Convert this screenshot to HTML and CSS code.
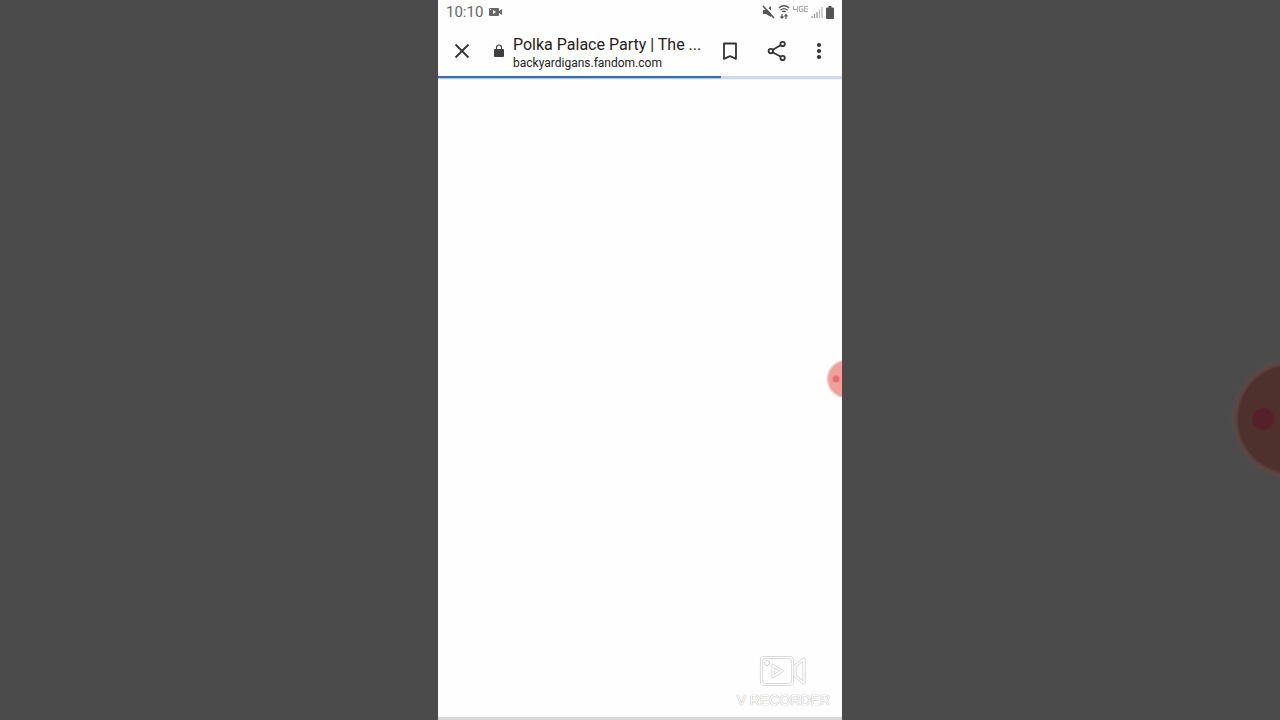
FILE: index.html
```html
<!DOCTYPE html>
<html lang="en">
<head>
  <meta charset="UTF-8" />
  <meta name="viewport" content="width=device-width, initial-scale=1">
  <title>Polka Palace Party | The Backyardigans</title>
  <link rel="stylesheet" href="styles.css">
</head>
<body>

  <div class="backdrop-bubble"></div>

  <main class="phone">
    <div class="status-bar">
      <span class="clock">10:10</span>
      <svg class="camera" width="14" height="10" viewBox="0 0 14 10">
        <path fill="#666" fill-rule="evenodd" d="M1 1h8q1 0 1 1v6q0 1-1 1H1q-1 0-1-1V2q0-1 1-1zm3 2v4l3-2zM1 2v1h1V2z"/>
        <path fill="#666" d="M10 4l3-2v6l-3-2z"/>
      </svg>

      <div class="status-icons">
        <svg width="13" height="14" viewBox="0 0 13 14">
          <path fill="#555" d="M1 5h3l5-4v11L4 9H1z"/>
          <path stroke="#fff" stroke-width="2" d="M2 0l11 11"/>
          <path stroke="#555" stroke-width="1.500" d="M1 1l11 12"/>
        </svg>
        <svg class="wifi" width="12" height="16" viewBox="0 0 12 16" fill="none" stroke="#555" stroke-width="1.200">
          <path d="M1 4q5-4.500 10 0M2.500 6.200q3.500-3.200 7 0M4.300 8q1.700-1.500 3.400 0"/>
          <path d="M4 10v4M2.500 12.500L4 14.200l1.500-1.700M8 15v-4M6.500 12.300L8 10.600l1.500 1.700"/>
        </svg>
        <svg class="lte" width="15" height="8" viewBox="0 0 15 8" fill="none" stroke="#aaa">
          <path d="M.5 1v3.500h4M4.500 1v6M10 1.500H6.500v5H10v-2.500H8M11 1.500h4M11 4h4M11 6.500h4M11.500 1v6"/>
        </svg>
        <svg class="signal" width="12" height="13" viewBox="0 0 12 13">
          <path stroke="#999" stroke-width="1.300" d="M1 12v-2M3.500 12V8M6 12V6"/>
          <path stroke="#bbb" stroke-width="1.300" d="M8.500 12V3.500M11 12V1"/>
        </svg>
        <svg class="battery" width="8" height="13" viewBox="0 0 8 13">
          <path fill="#555" d="M2.500 0h3v1.500H7q1 0 1 1V12q0 1-1 1H1q-1 0-1-1V2.500q0-1 1-1h1.500z"/>
        </svg>
      </div>
    </div>

    <header class="toolbar">
      <button class="close" aria-label="Close">
        <svg width="16" height="16" viewBox="0 0 16 16" stroke="#333" stroke-width="1.800">
          <path d="M1.500 1.500l13 13M14.500 1.500l-13 13"/>
        </svg>
      </button>
      <svg class="lock" width="10" height="14" viewBox="0 0 10 14">
        <rect y="5" width="10" height="8" rx="1" fill="#3c4043"/>
        <path d="M2.500 5.500V3.500a2.500 2.500 0 0 1 5 0v2" fill="none" stroke="#3c4043" stroke-width="1.200"/>
      </svg>
      <div class="page-info">
        <h1>Polka Palace Party | The ...</h1>
        <p>backyardigans.fandom.com</p>
      </div>
      <div class="actions">
        <button aria-label="Bookmark">
          <svg width="16" height="20" viewBox="0 0 16 20" fill="none" stroke="#333" stroke-width="1.800">
            <path d="M2 2.500h12v15.300l-6-2.600-6 2.600z" stroke-linejoin="round"/>
          </svg>
        </button>
        <button aria-label="Share">
          <svg width="20" height="22" viewBox="0 0 20 22" fill="none" stroke="#333" stroke-width="1.800">
            <path d="M5.500 10l8.500-5M5.500 12.200l8.500 4.600"/>
            <circle cx="3.800" cy="11" r="2.200"/>
            <circle cx="15.600" cy="4" r="2.200"/>
            <circle cx="15.600" cy="18" r="2.200"/>
          </svg>
        </button>
        <button aria-label="More options">
          <svg width="6" height="18" viewBox="0 0 6 18" fill="#333">
            <circle cx="3" cy="3" r="2.100"/>
            <circle cx="3" cy="9" r="2.100"/>
            <circle cx="3" cy="15" r="2.100"/>
          </svg>
        </button>
      </div>
    </header>

    <div class="progress"><div class="progress-fill" style="width: 70%"></div></div>

    <div class="record-bubble"></div>

    <div class="watermark">
      <svg width="48" height="32" viewBox="0 0 48 32" fill="none" stroke-linejoin="round">
        <g stroke="#d2d2d2" stroke-width="3.200">
          <rect x="2.500" y="2.500" width="31" height="27" rx="3"/>
          <path d="M36 11l9-7v24l-9-7z"/>
          <path d="M14 10.500l9 5.500-9 5.500z"/>
        </g>
        <g stroke="#fff" stroke-width="1.600">
          <rect x="2.500" y="2.500" width="31" height="27" rx="3"/>
          <path d="M36 11l9-7v24l-9-7z"/>
          <path d="M14 10.500l9 5.500-9 5.500z"/>
        </g>
        <circle cx="8" cy="8" r="2.500" stroke="#d2d2d2"/>
      </svg>
      <span>V RECORDER</span>
    </div>
  </main>

</body>
</html>
```
FILE: styles.css
```css
* {
  box-sizing: border-box;
}

body {
  margin: 0;
  height: 100vh;
  position: relative;
  display: flex;
  justify-content: center;
  background: #4b4b4b;
  font-family: Roboto, sans-serif;
}

/* both bubbles are cut off by the right edge */
.backdrop-bubble {
  position: absolute;
  top: 357px;
  right: 0;
  width: 50px;
  height: 124px;
  background: radial-gradient(circle at 33px 62px, #55202a 10px, transparent 12px),
    radial-gradient(circle at 62px 62px, #4e312d 53px, #594542 56px, #564a48 59px, #4b4b4b 62px);
}

.phone {
  position: relative;
  display: flex;
  flex-direction: column;
  height: 100%;
  aspect-ratio: 101 / 180;
  background: #fefefe;
  border-bottom: 3px solid #d8d8d8;
}

.status-bar {
  display: flex;
  align-items: center;
  height: 24px;
  padding: 0 8px;
  color: #666;
}

.clock {
  font-size: 15px;
}

.camera {
  margin-left: 6px;
}

.status-icons {
  display: flex;
  align-items: center;
  gap: 3px;
  margin-left: auto;
}

.lte {
  align-self: flex-start;
  margin-top: 1px;
}

.toolbar {
  display: flex;
  align-items: center;
  height: 52px;
  padding: 2px 20px 0 8px;
  color: #222;
}

button {
  display: flex;
  align-items: center;
  justify-content: center;
  padding: 0;
  border: none;
  background: none;
  cursor: pointer;
}

.close {
  width: 32px;
  height: 32px;
}

.lock {
  margin-left: 16px;
}

.page-info {
  margin-left: 9px;
  padding-top: 3px;
  white-space: nowrap;
}

.page-info h1 {
  margin: 0;
  font-size: 16px;
  font-weight: 400;
  line-height: 20px;
}

.page-info p {
  margin: 0;
  font-size: 12px;
  line-height: 16px;
}

.actions {
  display: flex;
  align-items: center;
  gap: 29px;
  margin-left: auto;
}

.progress {
  height: 4px;
  background: #cdd9ed;
  border-bottom: 1px solid #f0f5fc;
}

.progress-fill {
  height: 3px;
  background: #326dc0;
  border-bottom: 1px solid #a9c9f2;
}

.record-bubble {
  position: absolute;
  top: 359px;
  right: 0;
  width: 16px;
  height: 40px;
  background: radial-gradient(circle at 10px 20px, #ed6b75 3px, transparent 4px),
    radial-gradient(circle at 20px 20px, #f2a097 17px, #f5bbb5 18px, #fefefe 20px);
}

.watermark {
  display: flex;
  flex-direction: column;
  align-items: center;
  align-self: flex-end;
  gap: 4px;
  margin: auto 12px 8px 0;
}

.watermark span {
  color: #fff;
  font-family: "Liberation Sans", sans-serif;
  font-size: 14px;
  line-height: 18px;
  text-shadow: 0 0 1px #aaa, 0 0 1px #bbb;
}
```
